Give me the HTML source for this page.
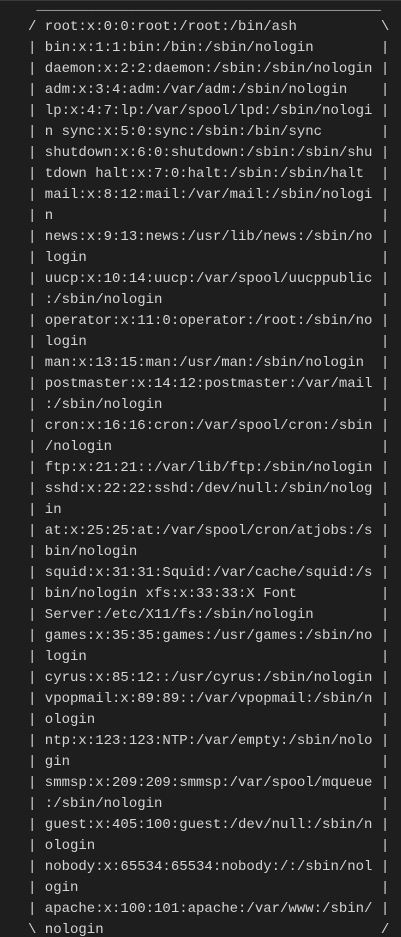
<!DOCTYPE html>
<html><head><style>
html,body{margin:0;padding:0;background:#1e1e1e;width:401px;height:937px;overflow:hidden}
body{border-top:1px solid #3a3a3a;box-sizing:border-box}
pre{margin:-5px 0 0 28px;font-family:"Liberation Mono",monospace;font-size:14px;line-height:21px;color:#d4d4d4}
</style></head><body><pre> _________________________________________
/ root:x:0:0:root:/root:/bin/ash          \
| bin:x:1:1:bin:/bin:/sbin/nologin        |
| daemon:x:2:2:daemon:/sbin:/sbin/nologin |
| adm:x:3:4:adm:/var/adm:/sbin/nologin    |
| lp:x:4:7:lp:/var/spool/lpd:/sbin/nologi |
| n sync:x:5:0:sync:/sbin:/bin/sync       |
| shutdown:x:6:0:shutdown:/sbin:/sbin/shu |
| tdown halt:x:7:0:halt:/sbin:/sbin/halt  |
| mail:x:8:12:mail:/var/mail:/sbin/nologi |
| n                                       |
| news:x:9:13:news:/usr/lib/news:/sbin/no |
| login                                   |
| uucp:x:10:14:uucp:/var/spool/uucppublic |
| :/sbin/nologin                          |
| operator:x:11:0:operator:/root:/sbin/no |
| login                                   |
| man:x:13:15:man:/usr/man:/sbin/nologin  |
| postmaster:x:14:12:postmaster:/var/mail |
| :/sbin/nologin                          |
| cron:x:16:16:cron:/var/spool/cron:/sbin |
| /nologin                                |
| ftp:x:21:21::/var/lib/ftp:/sbin/nologin |
| sshd:x:22:22:sshd:/dev/null:/sbin/nolog |
| in                                      |
| at:x:25:25:at:/var/spool/cron/atjobs:/s |
| bin/nologin                             |
| squid:x:31:31:Squid:/var/cache/squid:/s |
| bin/nologin xfs:x:33:33:X Font          |
| Server:/etc/X11/fs:/sbin/nologin        |
| games:x:35:35:games:/usr/games:/sbin/no |
| login                                   |
| cyrus:x:85:12::/usr/cyrus:/sbin/nologin |
| vpopmail:x:89:89::/var/vpopmail:/sbin/n |
| ologin                                  |
| ntp:x:123:123:NTP:/var/empty:/sbin/nolo |
| gin                                     |
| smmsp:x:209:209:smmsp:/var/spool/mqueue |
| :/sbin/nologin                          |
| guest:x:405:100:guest:/dev/null:/sbin/n |
| ologin                                  |
| nobody:x:65534:65534:nobody:/:/sbin/nol |
| ogin                                    |
| apache:x:100:101:apache:/var/www:/sbin/ |
\ nologin                                 /</pre></body></html>
